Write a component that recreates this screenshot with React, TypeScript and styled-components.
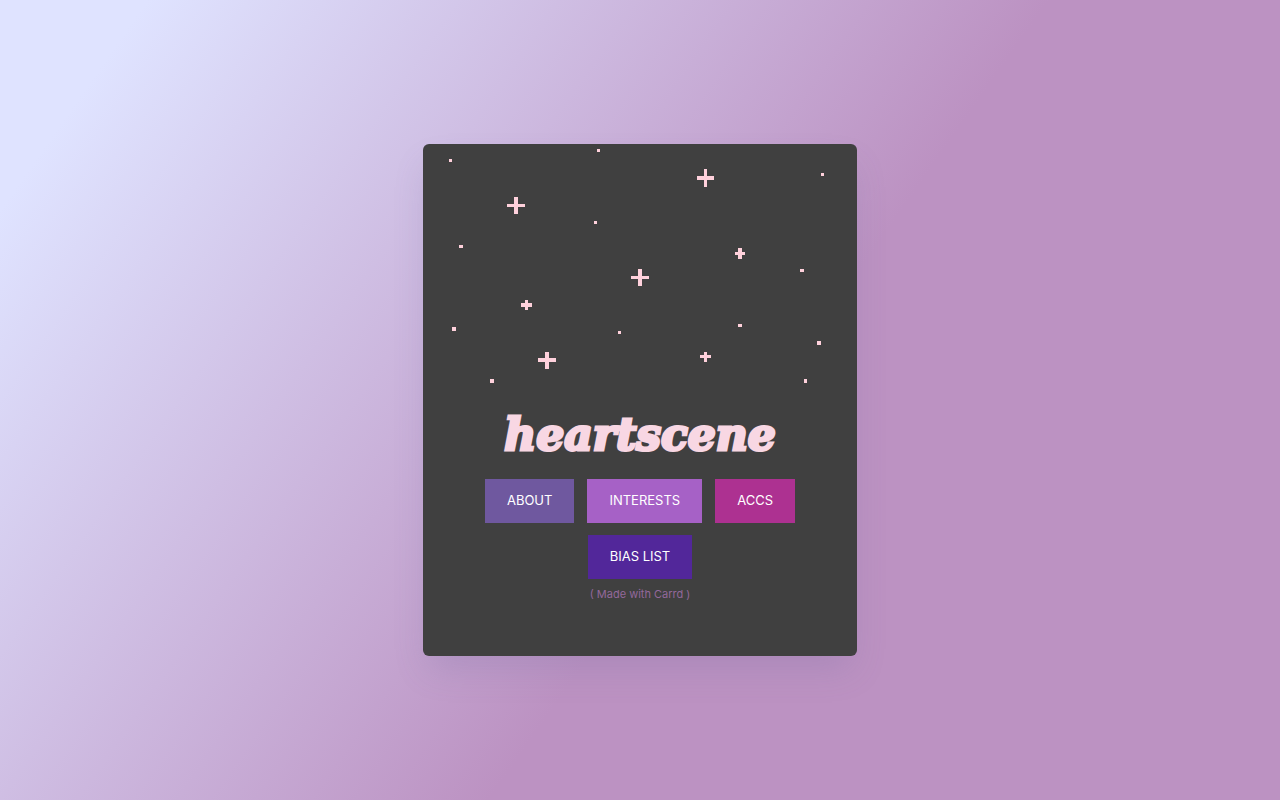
import React from 'react';
import styled, { createGlobalStyle } from 'styled-components';

const GlobalStyle = createGlobalStyle`
  *, *::before, *::after { box-sizing: border-box; }
  body {
    margin: 0;
    background: #bc92c2;
    font-family: Inter, 'Liberation Sans', sans-serif;
  }
`;

const Page = styled.main`
  min-height: 100vh;
  display: flex;
  align-items: center;
  justify-content: center;
  padding: 24px;
  background: linear-gradient(125deg, #dfe3ff 8%, #bc92c2 57%);
`;

const Card = styled.section`
  width: 100%;
  max-width: 434px;
  display: flex;
  flex-direction: column;
  align-items: center;
  padding-bottom: 52px;
  overflow: hidden;
  border-radius: 6px;
  background: #404040;
  box-shadow: 0 18px 32px -6px rgba(110, 105, 160, 0.22);
`;

const Sky = styled.svg`
  display: block;
  width: 100%;
  height: auto;
  fill: #ffd1dc;
`;

const Title = styled.h1`
  margin: 0;
  padding: 12px 0 16px;
  font-family: 'DejaVu Serif', serif;
  font-size: 44px;
  font-style: italic;
  font-weight: 700;
  line-height: 56px;
  color: #f8d7e3;
  -webkit-text-stroke: 3px #f8d7e3;
  stroke-linejoin: round;
`;

const Nav = styled.nav`
  display: flex;
  flex-wrap: wrap;
  justify-content: center;
  gap: 12px 13px;
  padding: 0 48px;
`;

const NavLink = styled.a<{ $color: string }>`
  height: 44px;
  padding: 0 22px;
  background: ${({ $color }) => $color};
  color: #ffffff;
  font-size: 13px;
  line-height: 43px;
  text-decoration: none;
  text-transform: uppercase;
`;

const Credit = styled.a`
  margin-top: 5px;
  font-size: 11px;
  line-height: 20px;
  color: #93689b;
  text-decoration: none;
`;

const dots = [
  [26, 15, 3, 3], [174, 5, 3, 3], [171, 77, 3, 3], [36, 101, 4, 3],
  [398, 29, 3, 3], [29, 183, 4, 4], [195, 187, 3, 3], [67, 235, 4, 4],
  [377, 125, 4, 3], [315, 180, 4, 3], [394, 197, 4, 4], [381, 235, 3, 4],
];

// Each sparkle is a horizontal bar followed by a vertical bar.
const sparkles = [
  'M84 60h18v3h-18z M91 53h4v17h-4z',
  'M274 32h17v4h-17z M281 25h3v18h-3z',
  'M312 108h10v3h-10z M315 104h4v11h-4z',
  'M208 132h18v3h-18z M215 125h4v17h-4z',
  'M98 159h11v4h-11z M102 156h3v10h-3z',
  'M115 214h18v4h-18z M122 208h4v17h-4z',
  'M277 211h11v3h-11z M281 208h3v10h-3z',
];

const links = [
  { label: 'About', href: '#about', color: '#6f589f' },
  { label: 'Interests', href: '#interests', color: '#a661c6' },
  { label: 'Accs', href: '#accs', color: '#ad3191' },
  { label: 'Bias list', href: '#bias', color: '#52279a' },
];

export default function App() {
  return (
    <>
      <GlobalStyle />
      <Page>
        <Card>
          <Sky viewBox="0 0 434 251" shapeRendering="crispEdges" aria-hidden="true">
            {dots.map(([x, y, width, height]) => (
              <rect key={`${x}-${y}`} x={x} y={y} width={width} height={height} />
            ))}
            {sparkles.map((d) => <path key={d} d={d} />)}
          </Sky>
          <Title>heartscene</Title>
          <Nav>
            {links.map(({ label, href, color }) => (
              <NavLink key={label} href={href} $color={color}>{label}</NavLink>
            ))}
          </Nav>
          <Credit href="#carrd">( Made with Carrd )</Credit>
        </Card>
      </Page>
    </>
  );
}
